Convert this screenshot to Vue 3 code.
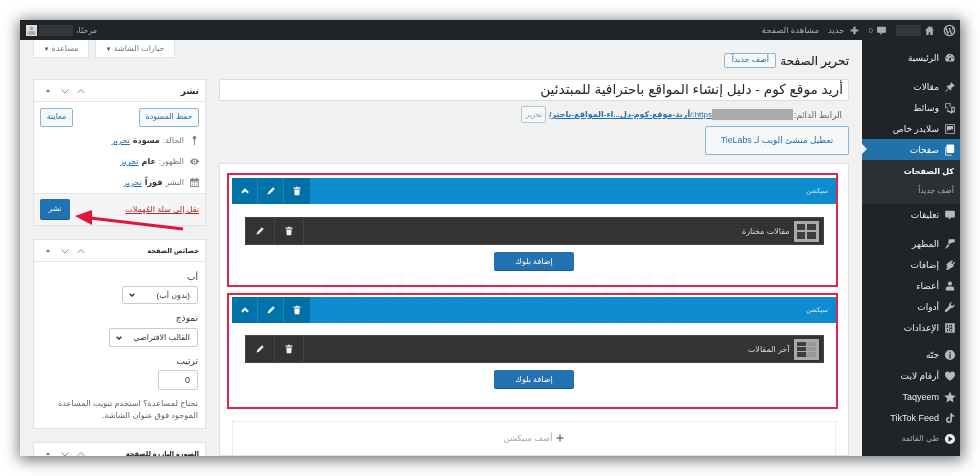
<script setup>
const icons = {
  wp: 'M10 1a9 9 0 1 0 0 18 9 9 0 0 0 0-18zM3 10c0-1 .2-2 .6-2.800L7 16.300A7 7 0 0 1 3 10zm7 7c-.7 0-1.300-.1-2-.3l2.100-6.100 2.200 5.900A7 7 0 0 1 10 17zm1-10.300c.4 0 .8-.1.8-.1.400 0 .3-.6 0-.6 0 0-1.100.1-1.800.1S8.200 6 8.200 6c-.4 0-.4.600 0 .6l.7.1 1 2.900-1.500 4.400-2.400-7.300.8-.1c.4 0 .3-.6 0-.6 0 0-1.100.1-1.800.1h-.4A7 7 0 0 1 15 4.900h-.1c-.7 0-1.200.6-1.200 1.200 0 .6.300 1.100.7 1.700.3.500.600 1.100.600 2 0 .6-.2 1.300-.6 2.300l-.7 2.500zM13.400 16l2.100-6.200c.4-1 .5-1.800.5-2.500v-.7A7 7 0 0 1 13.400 16z',
  home: 'M10 2 1.500 10H4v8h4.500v-5h3v5H16v-8h2.500L15.500 7.200V3h-2.200v2.100z',
  comment: 'M3 3h14a1 1 0 0 1 1 1v9a1 1 0 0 1-1 1h-5l-4 4v-4H3a1 1 0 0 1-1-1V4a1 1 0 0 1 1-1z',
  plus: 'M8 3h4v5h5v4h-5v5H8v-5H3V8h5z',
  dashboard: 'M10 3a8 8 0 0 0-8 8c0 2 .8 3.800 2 5h12a8 8 0 0 0-6-13zm0 1.500a1.200 1.200 0 1 1 0 2.400 1.200 1.200 0 0 1 0-2.400zM5 8.500a1.200 1.200 0 1 1 0 2.400 1.200 1.200 0 0 1 0-2.400zm10 0a1.200 1.200 0 1 1 0 2.400 1.200 1.200 0 0 1 0-2.400zm-1.500-2L11.300 11a1.900 1.900 0 1 1-1.300-.6z',
  pin: 'M12 2l6 6-1.500 1-1-.4L12 12c.6 1.600.3 3-.6 4L8 12.800 3 18l-1 0 0-1 5.200-5L4 8.600c1-.9 2.400-1.200 4-.6l3.400-3.500-.4-1z',
  media: 'M2 2h9v6H9.500V3.500h-6V9H7v1.500H2zM5.500 12.500h2V15H10v2H5.500zM12 8h6v8a2 2 0 1 1-1.500-1.900V10H14v7a2 2 0 1 1-2-2z',
  slider: 'M2 2h16v16H2zm1.500 1.500v13h13v-13zM5 5h10v6.500l-2-2-3 3-2-1.500-3 3z',
  pages: 'M6 1h9a2 2 0 0 1 2 2v10a2 2 0 0 1-2 2H6a2 2 0 0 1-2-2V3a2 2 0 0 1 2-2zM3 5v11a2 2 0 0 0 2 2h8v1H4a2 2 0 0 1-2-2V5z',
  brush: 'M8 2h10v6l-2-1.500-1 2-1.500-1.500-1 2L11 8 9.500 11 7 9zM6 10l3 2-1 2-1 .5-4 3.500-1-1 3-4.500z',
  plugin: 'M13 2l2 1-3 4 2 1.500 3-4 1.500 1.500-3 4c1 2-.5 4-2.500 4.500l-2 .5L9 17l-4 1.500L3 17l3-2.500-1.500-2 1-2-2-1.500L5 8z',
  user: 'M10 2.500a3.500 3.500 0 1 1 0 7 3.500 3.500 0 0 1 0-7zM3 17.500v-3c0-2 2-3.500 3.500-3.500h7c1.500 0 3.500 1.500 3.500 3.500v3z',
  wrench: 'M17.500 5.500l-3 3L12 7.500 11 5l3-3a5 5 0 0 0-5.500 6.500L2 15a2.100 2.100 0 0 0 3 3l6.500-6.500a5 5 0 0 0 6-6z',
  settings: 'M2 2h16v16H2zM5 4v4H4v1.500h3V8H6.500V4zm7 0v6h-1v1.500h3V10h-.500V4zM5 11.500v4.500h1.500v-4.500zM12 13v3h1.500v-3zM9 5H8v1.500h3V5zm-.200 3v8h1.500V8z',
  info: 'M10 1.500a8.500 8.500 0 1 1 0 17 8.500 8.500 0 0 1 0-17zM9 4.500v2.500h2V4.500zm0 4v7.500h2V8.500z',
  heart: 'M10 18C5 14.500 1.500 11 1.500 7a4.500 4.500 0 0 1 8.500-2 4.500 4.500 0 0 1 8.500 2c0 4-3.500 7.500-8.500 11z',
  star: 'M10 1l2.800 6 6.700.8-5 4.500 1.300 6.700L10 15.600 4.200 19l1.300-6.700-5-4.500 6.700-.8z',
  tiktok: 'M10.500 2h2.800c.2 2 1.500 3.300 3.700 3.500v2.700c-1.400 0-2.700-.4-3.700-1.200v6.300a5 5 0 1 1-4.500-5v2.800a2.300 2.300 0 1 0 1.700 2.200z',
  collapse: 'M10 1.500a8.500 8.500 0 1 1 0 17 8.500 8.500 0 0 1 0-17zM7.500 5.500v9l7-4.500z',
  chevron: 'M10 5l7 7-2.500 2.500L10 10l-4.500 4.500L3 12z',
  pencil: 'M14 2.500l3.500 3.500L8 15.500l-5 1.500 1.500-5z',
  trash: 'M8 1.500h4l.5 1.500H17v2.500H3V3h4.500zM4.500 7h11l-1 11.500h-9z',
  plusThin: 'M8.500 3h3v5.500H17v3h-5.500V17h-3v-5.500H3v-3h5.500z',
  key: 'M10 1.500a3.500 3.500 0 0 1 1 6.800V18H9V8.300a3.500 3.500 0 0 1 1-6.800z',
  eye: 'M10 4.500c4 0 7 3 8.500 5.500-1.500 2.500-4.500 5.500-8.500 5.500S3 12.500 1.500 10C3 7.500 6 4.500 10 4.500zm0 2a3.500 3.500 0 1 0 0 7 3.500 3.500 0 0 0 0-7zm0 1.800a1.700 1.700 0 1 1 0 3.400 1.700 1.700 0 0 1 0-3.400z',
  cal: 'M2 3h3V1.500h2V3h6V1.500h2V3h3v15H2zm1.500 5v8.500h13V8zM5 9.500h2v2H5zm4 0h2v2H9zm4 0h2v2h-2zm-8 3.500h2v2H5zm4 0h2v2H9zm4 0h2v2h-2z'
}

const menu = [
  [{ t: 'الرئيسية', i: 'dashboard' }],
  [
    { t: 'مقالات', i: 'pin' },
    { t: 'وسائط', i: 'media' },
    { t: 'سلايدر خاص', i: 'slider' },
    { t: 'صفحات', i: 'pages', active: true },
    { sub: true },
    { t: 'تعليقات', i: 'comment' }
  ],
  [
    { t: 'المظهر', i: 'brush' },
    { t: 'إضافات', i: 'plugin' },
    { t: 'أعضاء', i: 'user' },
    { t: 'أدوات', i: 'wrench' },
    { t: 'الإعدادات', i: 'settings' }
  ],
  [
    { t: 'جنّه', i: 'info' },
    { t: 'أرقام لايت', i: 'heart' },
    { t: 'Taqyeem', i: 'star' },
    { t: 'TikTok Feed', i: 'tiktok' },
    { t: 'طي القائمة', i: 'collapse', dim: true }
  ]
]

const sections = [
  { name: 'مقالات مختارة', layout: 'grid' },
  { name: 'آخر المقالات', layout: 'list' }
]

const status = [
  { i: 'key', label: 'الحالة:', val: 'مسودة' },
  { i: 'eye', label: 'الظهور:', val: 'عام' },
  { i: 'cal', label: 'النشر', val: 'فوراً' }
]
</script>

<template>
  <div class="stage" dir="rtl">
    <div class="window">
      <header class="adminbar">
        <svg class="ab-ic wp" viewBox="0 0 20 20"><path fill-rule="evenodd" :d="icons.wp" /></svg>
        <svg class="ab-ic home" viewBox="0 0 20 20"><path :d="icons.home" /></svg>
        <span class="mask m1"></span>
        <svg class="ab-ic cmt" viewBox="0 0 20 20"><path :d="icons.comment" /></svg>
        <span class="ab-zero">0</span>
        <svg class="ab-ic plus" viewBox="0 0 20 20"><path :d="icons.plus" /></svg>
        <span class="ab-t new">جديد</span>
        <span class="ab-t">مشاهدة الصفحة</span>
        <span class="ab-user">
          <span class="ab-t">مرحبًا،</span>
          <span class="mask m2"></span>
          <span class="avatar">
            <svg viewBox="0 0 20 20"><path :d="icons.user" /></svg>
          </span>
        </span>
      </header>

      <div class="body">
        <nav class="sidebar">
          <div v-for="(group, g) in menu" :key="g" class="group">
            <template v-for="(m, k) in group" :key="k">
              <div v-if="m.sub" class="submenu">
                <div class="sub-cur">كل الصفحات</div>
                <div class="sub-add">أضف جديداً</div>
              </div>
              <div v-else class="item" :class="{ active: m.active, dim: m.dim }">
                <svg viewBox="0 0 20 20"><path fill-rule="evenodd" :d="icons[m.i]" /></svg>
                <span>{{ m.t }}</span>
              </div>
            </template>
          </div>
        </nav>

        <div class="wrap">
          <main class="col-main">
            <div class="head">
              <h1>تحرير الصفحة</h1>
              <span class="btn-add">أضف جديداً</span>
            </div>
            <div class="title-input">أريد موقع كوم - دليل إنشاء المواقع باحترافية للمبتدئين</div>
            <div class="permalink">
              <span class="pl-label">الرابط الدائم:</span>
              <span class="pl-mask"></span>
              <a class="pl-link">https:/<b>أريد-موقع-كوم-دل...اء-المواقع-باحتر/</b></a>
              <span class="pl-edit">تحرير</span>
            </div>
            <div class="builder-row">
              <span class="builder-btn">تعطيل منشئ الويب لـ TieLabs</span>
            </div>
            <div class="canvas">
              <section v-for="s in sections" :key="s.name" class="sec">
                <div class="sec-bar">
                  <span class="sec-name">سيكشن</span>
                  <span class="cell first"><svg viewBox="0 0 20 20"><path :d="icons.trash" /></svg></span>
                  <span class="cell"><svg viewBox="0 0 20 20"><path :d="icons.pencil" /></svg></span>
                  <span class="cell"><svg class="chev" viewBox="0 0 20 20"><path :d="icons.chevron" /></svg></span>
                </div>
                <div class="sec-body">
                  <div class="block">
                    <span class="thumb" :class="s.layout">
                      <template v-if="s.layout === 'grid'">
                        <i></i><i></i><i></i><i></i>
                      </template>
                      <template v-else>
                        <i></i><i></i><i></i><i></i><i></i><i></i>
                      </template>
                    </span>
                    <span class="block-name">{{ s.name }}</span>
                    <span class="dcell first"><svg viewBox="0 0 20 20"><path :d="icons.trash" /></svg></span>
                    <span class="dcell"><svg viewBox="0 0 20 20"><path :d="icons.pencil" /></svg></span>
                  </div>
                  <span class="btn-block">إضافة بلوك</span>
                </div>
              </section>
              <div class="add-sec">
                <svg viewBox="0 0 20 20"><path :d="icons.plusThin" /></svg>
                <span>أضف سيكشن</span>
              </div>
              <div class="watermark" dir="ltr">ORIDSITE.COM</div>
            </div>
          </main>

          <aside class="col-side">
            <div class="tabs">
              <span class="tab">خيارات الشاشة <small>▼</small></span>
              <span class="tab">مساعدة <small>▼</small></span>
            </div>

            <div class="box">
              <div class="box-h">
                <span class="box-t big">نشر</span>
                <span class="box-tools">
                  <svg viewBox="0 0 20 20"><path d="M3 14 10 7l7 7" /></svg>
                  <svg viewBox="0 0 20 20"><path d="M3 7l7 7 7-7" /></svg>
                  <i class="tri"></i>
                </span>
              </div>
              <div class="pub-btns">
                <span class="btn-l w60">حفظ المسودة</span>
                <span class="btn-l w33">معاينة</span>
              </div>
              <div v-for="r in status" :key="r.i" class="st-row">
                <svg viewBox="0 0 20 20"><path fill-rule="evenodd" :d="icons[r.i]" /></svg>
                <span>{{ r.label }}</span>
                <b>{{ r.val }}</b>
                <a>تحرير</a>
              </div>
              <div class="pub-foot">
                <a class="trash-l">نقل إلى سلة المُهملات</a>
                <span class="btn-pub">نشر</span>
              </div>
            </div>

            <div class="box attrs">
              <div class="box-h">
                <span class="box-t">خصائص الصفحة</span>
                <span class="box-tools">
                  <svg viewBox="0 0 20 20"><path d="M3 14 10 7l7 7" /></svg>
                  <svg viewBox="0 0 20 20"><path d="M3 7l7 7 7-7" /></svg>
                  <i class="tri"></i>
                </span>
              </div>
              <div class="attrs-b">
                <div class="lbl">أب</div>
                <div class="sel s1"><span>(بدون أب)</span><svg class="down" viewBox="0 0 20 20"><path :d="icons.chevron" /></svg></div>
                <div class="lbl">نموذج</div>
                <div class="sel s2"><span>القالب الافتراضي</span><svg class="down" viewBox="0 0 20 20"><path :d="icons.chevron" /></svg></div>
                <div class="lbl">ترتيب</div>
                <div class="num">0</div>
                <p class="help">تحتاج لمساعدة؟ استخدم تبويب المساعدة الموجود فوق عنوان الشاشة.</p>
              </div>
            </div>

            <div class="box last">
              <div class="box-h">
                <span class="box-t">الصورة البارزة للصفحة</span>
                <span class="box-tools">
                  <svg viewBox="0 0 20 20"><path d="M3 14 10 7l7 7" /></svg>
                  <svg viewBox="0 0 20 20"><path d="M3 7l7 7 7-7" /></svg>
                  <i class="tri"></i>
                </span>
              </div>
            </div>
          </aside>
        </div>
      </div>
    </div>

    <svg class="arrow" viewBox="0 0 980 476" width="980" height="476">
      <path d="M183 229 86 217.500" stroke="#e0143c" stroke-width="3" fill="none" />
      <path d="M75 216 92 210 92 225z" fill="#e0143c" />
    </svg>
  </div>
</template>

<style>
html, body { margin: 0; background: #fff; }
</style>

<style scoped>
.stage {
  position: relative;
  width: 980px;
  height: 476px;
  padding: 20px;
  box-sizing: border-box;
  overflow: hidden;
  background: #fff;
  font-family: "Liberation Sans", "DejaVu Sans", sans-serif;
  color: #444;
  filter: blur(0.5px);
}
svg { display: block; fill: currentColor; flex: none; }

.window {
  width: 940px;
  height: 436px;
  display: flex;
  flex-direction: column;
  overflow: hidden;
  background: #f1f1f1;
  box-shadow: 1px 2px 14px 2px rgba(0, 0, 0, .55);
}

.adminbar {
  flex: none;
  height: 20px;
  display: flex;
  align-items: center;
  background: #1f2428;
  color: #a8adb2;
  font-size: 8.500px;
}
.ab-ic { width: 13px; height: 13px; }
.ab-ic.wp { margin-right: 4px; }
.ab-ic.home { margin-right: 8px; width: 11px; height: 11px; }
.mask { display: block; height: 11px; background: #32373b; }
.mask.m1 { width: 25px; margin-right: 3px; }
.ab-ic.cmt { margin-right: 9px; width: 11px; height: 11px; }
.ab-zero { margin-right: 3px; color: #888; font-size: 8px; }
.ab-ic.plus { margin-right: 9px; width: 11px; height: 11px; }
.ab-t { white-space: nowrap; }
.ab-t.new { margin-left: 9px; margin-right: 4px; }
.ab-user { display: flex; align-items: center; margin-right: auto; margin-left: 6px; }
.ab-user .ab-t { font-size: 8px; }
.mask.m2 { width: 34px; margin-right: 3px; }
.avatar { display: flex; width: 11px; height: 11px; margin-right: 2px; background: #ddd; color: #aaa; }

.body { flex: 1; display: flex; min-height: 0; }

.sidebar {
  flex: none;
  width: 98px;
  background: #1f2428;
  color: #eee;
  font-size: 9px;
  padding-top: 7px;
}
.group { margin-bottom: 8px; }
.group:nth-child(3) { margin-bottom: 6px; }
.item {
  position: relative;
  height: 21px;
  display: flex;
  align-items: center;
  gap: 5px;
  padding-right: 5px;
  white-space: nowrap;
}
.item svg { width: 12px; height: 12px; margin-right: -.5px; margin-left: -.5px; color: #b4b9be; }
.item.active { background: #2271aa; color: #fff; }
.item.active svg { color: #fff; }
.item.active::after {
  content: "";
  position: absolute;
  left: 0;
  top: 5px;
  border: 5px solid transparent;
  border-left-color: #f1f1f1;
}
.item.dim { color: #a7aaad; font-size: 8px; }
.item.dim svg { color: #eee; }
.submenu { height: 44px; box-sizing: border-box; background: #2c3035; padding: 2px 5px 0 0; }
.sub-cur { height: 20px; line-height: 20px; color: #fff; font-weight: 700; font-size: 8px; padding-right: 1px; }
.sub-add { height: 17px; line-height: 17px; color: #a7aaad; font-size: 7.700px; padding-right: 1px; }

.wrap {
  flex: 1;
  min-width: 0;
  display: flex;
  justify-content: space-between;
  padding: 0 13px;
}
.col-main { position: relative; width: 630px; flex: none; }
.col-side { width: 173px; flex: none; }

.head { display: flex; align-items: center; gap: 4px; height: 15px; margin: 13px 0 11px; }
h1 { margin: 0; font-size: 12px; font-weight: 400; color: #1d2327; -webkit-text-stroke: .15px #1d2327; }
.btn-add {
  box-sizing: border-box;
  width: 52px; height: 15px;
  line-height: 12px;
  text-align: center;
  font-size: 8px;
  color: #2271b1;
  background: #f6f7f7;
  border: 1px solid #8ab6d6;
  border-radius: 2px;
}
.title-input {
  box-sizing: border-box;
  height: 22px;
  line-height: 20px;
  padding: 0 5px;
  font-size: 13.700px;
  color: #23282d;
  background: #fff;
  border: 1px solid #ddd;
  border-radius: 2px;
  white-space: nowrap;
}
.permalink {
  display: flex;
  align-items: center;
  height: 17px;
  margin: 5px 7px 3px 0;
  font-size: 8px;
  color: #666;
  white-space: nowrap;
}
.pl-label { font-size: 8.700px; }
.pl-mask { width: 81px; height: 11px; margin-right: 1px; background: #aaa; }
.pl-link { color: #2271b1; text-decoration: underline; }
.pl-link b { font-weight: 700; }
.pl-edit {
  box-sizing: border-box;
  width: 25px; height: 17px;
  margin-right: 3px;
  line-height: 15px;
  text-align: center;
  font-size: 7px;
  color: #7a9ab5;
  background: #f6f7f7;
  border: 1px solid #a9c7de;
  border-radius: 2px;
}
.builder-row { display: flex; height: 29px; margin-bottom: 8px; }
.builder-btn {
  box-sizing: border-box;
  width: 144px;
  line-height: 27px;
  text-align: center;
  font-size: 8.800px;
  color: #2271b1;
  background: #f6f7f7;
  border: 1px solid #8ab6d6;
  border-radius: 2px;
  white-space: nowrap;
}
.canvas {
  position: relative;
  height: 293px;
  box-sizing: border-box;
  padding: 9px 10px 0 0;
  background: #fff;
  border: 1px solid #e2e2e2;
  overflow: hidden;
}
.sec {
  width: 611px;
  box-sizing: border-box;
  padding: 3px 0 0 0;
  border: 2px solid #e0234f;
  margin-bottom: 6px;
}
.sec + .sec { padding-top: 2px; }
.sec-bar {
  display: flex;
  align-items: stretch;
  width: 604px;
  height: 26px;
  background: #0d8dd0;
  color: #fff;
}
.sec-name { align-self: center; padding-right: 8px; font-size: 6.500px; color: #cfe6f5; }
.cell {
  width: 26px;
  display: flex;
  align-items: center;
  justify-content: center;
  background: #0073aa;
  border-right: 1px solid #1d82b5;
  box-sizing: border-box;
}
.cell.first { margin-right: auto; background: #006fa5; border-right: 0; }
.cell svg { width: 10px; height: 10px; color: #fff; }
.chev { stroke: #fff; }
.sec-body { display: flex; flex-direction: column; align-items: center; padding: 13px 0 14px; width: 604px; }
.sec + .sec .sec-body { padding: 12px 0 18px; }
.block {
  box-sizing: border-box;
  width: 579px;
  height: 28px;
  display: flex;
  align-items: stretch;
  background: #333;
  color: #ddd;
  border: 1px solid #444;
}
.block-name { align-self: center; margin-right: 4px; font-size: 8px; white-space: nowrap; }
.dcell {
  width: 29px;
  display: flex;
  align-items: center;
  justify-content: center;
  border-right: 1px solid #444;
  box-sizing: border-box;
  color: #eee;
}
.dcell.first { margin-right: auto; }
.dcell svg { width: 10px; height: 10px; }
.thumb {
  flex: none;
  align-self: center;
  box-sizing: border-box;
  width: 25px;
  height: 21px;
  margin-right: 4px;
  padding: 3px;
  background: #aaa;
  display: grid;
  gap: 2px;
}
.thumb i { background: #3d3d3d; }
.thumb.grid { grid-template: 1fr 1fr / 1fr 1fr; }
.thumb.list { grid-template: repeat(3, 1fr) / 1fr 1fr; gap: 1px 0; }
.thumb.list i:nth-child(odd) { background: #999; }
.btn-block {
  box-sizing: border-box;
  width: 80px;
  height: 19px;
  margin-top: 7px;
  line-height: 19px;
  text-align: center;
  font-size: 8px;
  color: #fff;
  background: #2271b1;
  border-bottom: 1px solid #135e96;
  border-radius: 2px;
}
.add-sec {
  box-sizing: border-box;
  width: 604px;
  height: 60px;
  margin: 12px 2px 0 0;
  padding-top: 11px;
  display: flex;
  justify-content: center;
  gap: 2px;
  border: 1px dotted #ddd;
  font-size: 8.500px;
  color: #aaa;
}
.add-sec svg { width: 10px; height: 10px; color: #777; }
.watermark {
  position: absolute;
  left: 100px;
  top: 100px;
  font-size: 72px;
  line-height: 1;
  font-weight: 700;
  transform: scaleX(.68);
  transform-origin: left top;
  color: rgba(120, 120, 120, .025);
  pointer-events: none;
  white-space: nowrap;
}

.tabs { display: flex; justify-content: flex-end; gap: 6px; height: 18px; margin-bottom: 21px; margin-left: -1px; padding-left: 1px; }
.tab {
  box-sizing: border-box;
  line-height: 17px;
  padding: 0 5px;
  min-width: 56px;
  text-align: center;
  font-size: 8px;
  color: #777;
  background: #fff;
  border: 1px solid #e4e4e4;
  border-top: 0;
  white-space: nowrap;
}
.tab small { font-size: 6px; color: #555; }
.tab:first-child { width: 80px; }

.box { background: #fff; border: 1px solid #e2e2e2; margin-bottom: 13px; box-sizing: border-box; }
.box-h {
  box-sizing: border-box;
  height: 22px;
  padding: 0 0 0 7px;
  display: flex;
  align-items: center;
  justify-content: space-between;
  border-bottom: 1px solid #e6e6e6;
}
.box-t { padding-right: 6px; font-size: 6.600px; font-weight: 700; color: #23282d; white-space: nowrap; }
.box-t.big { font-size: 9px; }
.box-tools { display: flex; align-items: center; gap: 6px; color: #8a8f94; }
.box-tools svg { width: 10px; height: 10px; fill: none; stroke: currentColor; stroke-width: 2; }
.down { transform: rotate(180deg); }
.tri { display: block; border: 2.500px solid transparent; border-bottom: 3.500px solid #777; border-top: 0; margin-left: 5px; margin-right: 4px; }

.pub-btns { display: flex; justify-content: space-between; padding: 6px 6px 0; }
.btn-l {
  box-sizing: border-box;
  height: 19px;
  line-height: 16px;
  text-align: center;
  font-size: 8px;
  color: #2271b1;
  background: #f6f7f7;
  border: 1px solid #8ab6d6;
  border-radius: 2px;
  white-space: nowrap;
}
.w60 { width: 60px; }
.w33 { width: 33px; }
.st-row {
  display: flex;
  align-items: center;
  gap: 3px;
  height: 21px;
  padding-right: 5px;
  font-size: 8px;
  color: #777;
  white-space: nowrap;
}
.pub-btns + .st-row { margin-top: 3px; }
.st-row svg { width: 11px; height: 11px; margin-left: 2px; color: #888; }
.st-row b { color: #333; }
.st-row a { color: #2271b1; text-decoration: underline; }
.pub-foot {
  height: 32px;
  padding: 0 0 0 6px;
  display: flex;
  align-items: center;
  justify-content: space-between;
  background: #f5f5f5;
  border-top: 1px solid #e6e6e6;
  box-sizing: border-box;
}
.trash-l { padding-right: 6px; font-size: 8px; color: #b32d2e; text-decoration: underline; white-space: nowrap; }
.btn-pub {
  width: 30px;
  height: 20px;
  line-height: 20px;
  text-align: center;
  font-size: 7.500px;
  color: #fff;
  background: #2271b1;
  border-bottom: 1px solid #135e96;
  border-radius: 2px;
}
.attrs { height: 190px; }
.attrs-b { padding: 0 7px; font-size: 9px; color: #333; }
.lbl { height: 12px; line-height: 12px; }
.lbl:first-child { margin-top: 9px; }
.sel {
  box-sizing: border-box;
  height: 18px;
  margin: 3px 0 8px;
  padding: 0 7px 0 5px;
  display: flex;
  align-items: center;
  justify-content: space-between;
  background: #fff;
  border: 1px solid #ccc;
  border-radius: 2px;
  white-space: nowrap;
  color: #333;
  font-size: 8px;
}
.sel svg { width: 8px; height: 8px; }
.sel.s1 { width: 76px; }
.sel.s2 { width: 89px; height: 19px; margin-top: 4px; }
.num {
  box-sizing: border-box;
  width: 40px;
  height: 20px;
  margin: 3px 0 8px;
  padding: 0 7px;
  line-height: 18px;
  background: #fff;
  border: 1px solid #ccc;
  border-radius: 2px;
  font-size: 9px;
  text-align: right;
}
.help { margin: 0; font-size: 8.200px; line-height: 12px; color: #666; }
.box.last { margin: 0; height: 30px; }
.arrow { position: absolute; left: 0; top: 0; pointer-events: none; }
</style>
